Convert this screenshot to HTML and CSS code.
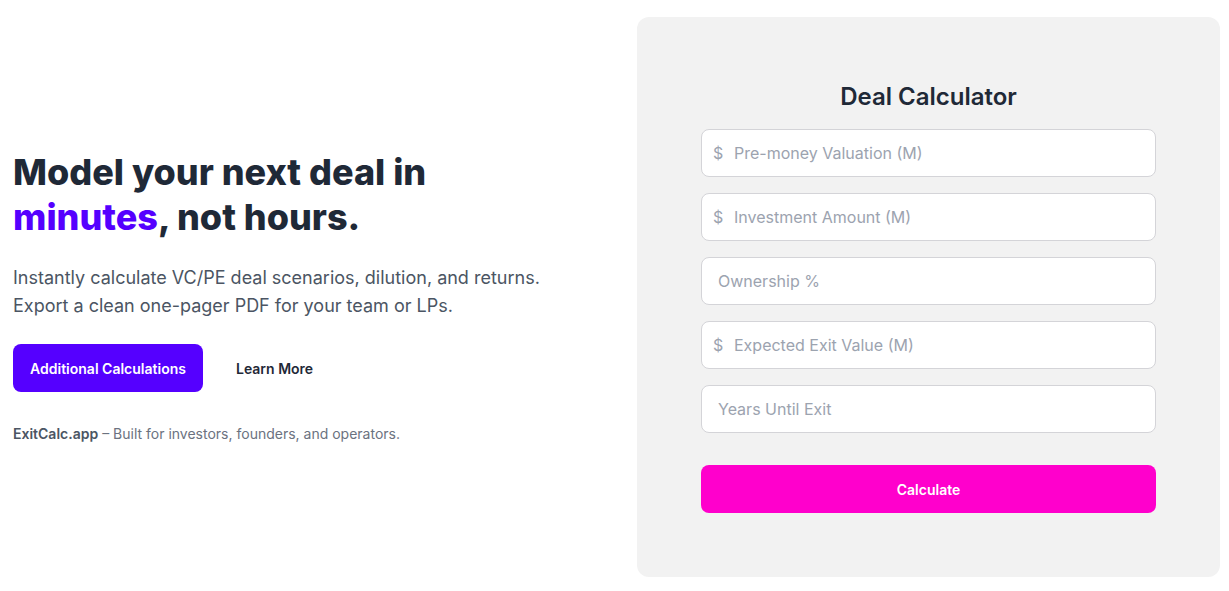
FILE: index.html
```html
<!DOCTYPE html>
<html lang="en">
<head>
<meta charset="utf-8">
<title>ExitCalc</title>
<link rel="stylesheet" href="styles.css">
</head>
<body>
<main class="page">
  <section class="hero">
    <h1 class="hero-title">Model your next deal in <span class="accent">minutes</span>, not hours.</h1>
    <p class="hero-text">Instantly calculate VC/PE deal scenarios, dilution, and returns.<br>Export a clean one-pager PDF for your team or LPs.</p>
    <div class="hero-actions">
      <button class="btn btn-primary" type="button">Additional Calculations</button>
      <button class="btn btn-link" type="button">Learn More</button>
    </div>
    <p class="hero-note"><strong>ExitCalc.app</strong> – Built for investors, founders, and operators.</p>
  </section>
  <section class="panel">
    <h2 class="panel-title">Deal Calculator</h2>
    <form class="calc-form">
      <label class="field field-money"><span class="prefix">$</span><input type="text" placeholder="Pre-money Valuation (M)"></label>
      <label class="field field-money"><span class="prefix">$</span><input type="text" placeholder="Investment Amount (M)"></label>
      <label class="field"><input type="text" placeholder="Ownership %"></label>
      <label class="field field-money"><span class="prefix">$</span><input type="text" placeholder="Expected Exit Value (M)"></label>
      <label class="field"><input type="text" placeholder="Years Until Exit"></label>
      <button class="btn btn-calc" type="button">Calculate</button>
    </form>
  </section>
</main>
</body>
</html>
```

FILE: styles.css
```css
* { box-sizing: border-box; }
html, body { margin: 0; padding: 0; background: #ffffff; }
body {
  font-family: Inter, "Noto Sans", "Liberation Sans", sans-serif;
  color: #1f2937;
}
.page {
  display: flex;
  align-items: center;
  gap: 24px;
  padding: 17px 9px 15px 13px;
  min-height: 591px;
}
.hero {
  flex: 1;
  min-width: 0;
}
.hero-title {
  margin: 0;
  font-size: 36px;
  line-height: 45px;
  font-weight: 800;
  color: #1f2937;
  max-width: 520px;
}
.accent { color: #5500ff; }
.hero-text {
  margin: 24px 0 0;
  font-size: 18px;
  line-height: 28px;
  color: #4b5563;
}
.hero-actions {
  margin-top: 24px;
  display: flex;
  align-items: center;
  gap: 16px;
}
.btn {
  font-family: inherit;
  border: none;
  cursor: pointer;
  font-size: 14px;
  font-weight: 600;
  height: 48px;
  border-radius: 8px;
}
.btn-primary {
  background: #5500ff;
  color: #ffffff;
  width: 190px;
  padding: 0;
}
.btn-link {
  background: transparent;
  color: #1f2937;
  padding: 0 17px;
}
.hero-note {
  margin: 32px 0 0;
  font-size: 14px;
  line-height: 20px;
  color: #6b7280;
}
.hero-note strong { font-weight: 600; color: #4b5563; }
.panel {
  width: 583px;
  flex: none;
  background: #f2f2f2;
  border-radius: 12px;
  padding: 64px;
}
.panel-title {
  margin: 0 0 16px;
  text-align: center;
  font-size: 24px;
  line-height: 32px;
  font-weight: 600;
  color: #1f2937;
}
.calc-form {
  display: flex;
  flex-direction: column;
  gap: 16px;
}
.field {
  display: flex;
  align-items: center;
  height: 48px;
  background: #ffffff;
  border: 1px solid #d4d4d8;
  border-radius: 8px;
  padding: 0 16px;
}
.field-money { padding-left: 11px; }
.prefix {
  color: #9ca3af;
  font-size: 16px;
  width: 21px;
  flex: none;
}
.field input {
  flex: 1;
  min-width: 0;
  border: none;
  outline: none;
  background: transparent;
  font-family: inherit;
  font-size: 16px;
  color: #1f2937;
  padding: 0;
}
.field input::placeholder { color: #9ca3af; }
.btn-calc {
  margin-top: 16px;
  width: 100%;
  background: #ff00cc;
  color: #ffffff;
}
```
